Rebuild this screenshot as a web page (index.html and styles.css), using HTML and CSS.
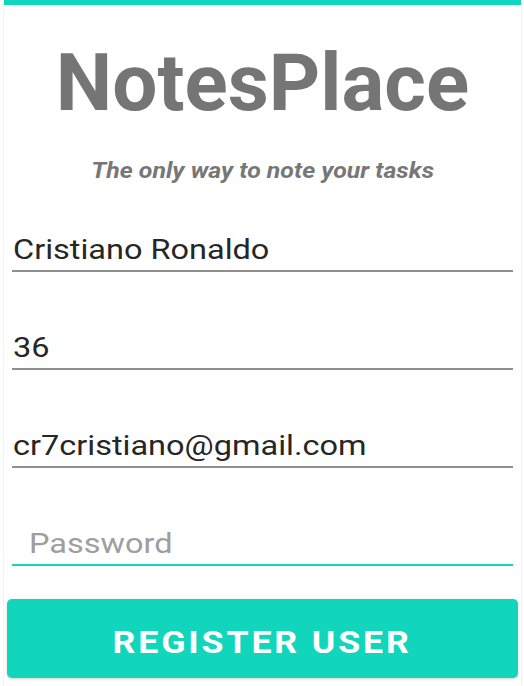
FILE: index.html
```html
<!DOCTYPE html>
<html>
<head>
<meta charset="utf-8">
<link rel="stylesheet" href="styles.css">
</head>
<body>
<div class="page">
  <div class="topbar"></div>
  <h1 class="title">NotesPlace</h1>
  <p class="subtitle"><span class="subtitle-text">The only way to note your tasks</span></p>
  <form class="form">
    <div class="field"><span class="value">Cristiano Ronaldo</span></div>
    <div class="field"><span class="value">36</span></div>
    <div class="field"><span class="value">cr7cristiano@gmail.com</span></div>
    <div class="field field-active"><span class="value hint">Password</span></div>
  </form>
  <div class="button"><span class="button-text">REGISTER USER</span></div>
</div>
</body>
</html>
```

FILE: styles.css
```css
html, body {
  margin: 0;
  padding: 0;
  background: #ffffff;
}
body {
  font-family: Roboto, "Liberation Sans", sans-serif;
  width: 524px;
  height: 686px;
  overflow: hidden;
}
.page {
  margin: 0 2px 0 3px;
  height: 686px;
  border-left: 1px solid #f3f3f3;
  border-right: 1px solid #f3f3f3;
  box-sizing: border-box;
  display: flex;
  flex-direction: column;
}
.topbar {
  height: 5px;
  background: #10d6be;
}
.title {
  margin: 31px 0 0 0;
  font-size: 80px;
  line-height: 94px;
  font-weight: 700;
  color: #757575;
  text-align: center;
}
.subtitle {
  margin: 28px 0 0 0;
  font-size: 22px;
  line-height: 26px;
  font-weight: 700;
  font-style: italic;
  color: #777777;
  text-align: center;
}
.subtitle-text {
  display: inline-block;
  transform: scaleX(1.13);
}
.form {
  margin: 49px 0 0 0;
  padding: 0 8px;
  display: flex;
  flex-direction: column;
  gap: 59px;
}
.field {
  font-size: 28px;
  line-height: 33px;
  padding: 0 0 4px 1px;
  border-bottom: 2px solid #8f8f8f;
  color: #262626;
}
.value {
  display: inline-block;
  transform: scaleX(1.16);
  transform-origin: left center;
}
.field-active {
  border-bottom-color: #16d4bd;
}
.hint {
  color: #9e9e9e;
  margin-left: 16px;
}
.button {
  margin: 33px 3px 0 3px;
  height: 79px;
  box-sizing: border-box;
  padding-top: 7px;
  border-radius: 5px;
  background: #12d6bc;
  color: #ffffff;
  font-size: 31px;
  font-weight: 700;
  letter-spacing: 2.5px;
  display: flex;
  align-items: center;
  justify-content: center;
  box-shadow: 0 1px 3px rgba(0,0,0,0.18);
}
.button-text {
  display: inline-block;
  transform: scaleX(1.15);
}
```
